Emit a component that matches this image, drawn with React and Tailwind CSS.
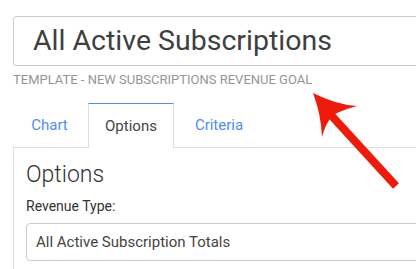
export default function App() {
  return (
    <div className="relative w-[416px] h-[269px] overflow-hidden bg-white font-['Roboto',sans-serif]">
      <div className="pl-[13px] pt-[16px]">
        <div className="w-[440px] h-[50px] border border-[#cccccc] rounded-[3px] flex items-center pl-[19px]">
          <span className="text-[28.5px] leading-none text-[#3f3f3f] font-normal">All Active Subscriptions</span>
        </div>
        <div className="mt-[7px] text-[13px] leading-[13px] text-[#959595] uppercase">
          Template - New Subscriptions Revenue Goal
        </div>

        <div className="mt-[17px] flex h-[44px]">
          <div className="w-[73px] mr-[2px] flex items-center justify-center text-[15px] text-[#4f8ef2]">Chart</div>
          <div className="w-[86px] mr-[2px] border border-b-0 border-[#dddddd] border-t-[#4f8ef2] bg-white flex items-center justify-center text-[15px] text-[#444444] relative z-10 h-[45px]">Options</div>
          <div className="w-[86px] flex items-center justify-center text-[15px] text-[#4f8ef2]">Criteria</div>
        </div>

        <div className="border-l border-t border-[#dddddd] pl-[12px] pt-[12px] h-[200px]">
          <div className="text-[23px] leading-[30px] text-[#333333] font-light">Options</div>
          <div className="mt-[7px] text-[14px] leading-[18px] text-[#333333]">Revenue Type:</div>
          <div className="mt-[8px] w-[420px] h-[38px] border border-[#cccccc] rounded-[4px] flex items-center pl-[9px] text-[15px] text-[#444444]">
            All Active Subscription Totals
          </div>
        </div>
      </div>

      <svg className="absolute left-0 top-0 pointer-events-none" width="416" height="269" viewBox="0 0 416 269">
        <line x1="330" y1="114" x2="396" y2="186" stroke="#ee1a0a" strokeWidth="8" strokeLinecap="butt" />
        <path d="M313 93 Q337 105 357 106 Q339 111 332 116 Q325 125 322 137 Q321 114 313 93 Z" fill="#ee1a0a" />
      </svg>
    </div>
  );
}
